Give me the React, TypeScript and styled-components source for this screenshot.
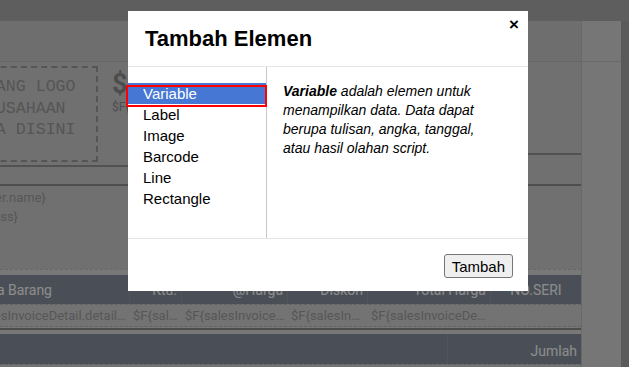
import React from 'react';
import styled, { createGlobalStyle } from 'styled-components';

const GlobalStyle = createGlobalStyle`
  html, body {
    margin: 0;
    padding: 0;
    width: 629px;
    height: 367px;
    overflow: hidden;
  }
  body {
    font-family: Roboto, "Liberation Sans", Arial, sans-serif;
  }
`;

const Page = styled.div`
  position: relative;
  width: 629px;
  height: 367px;
  overflow: hidden;
  display: flex;
  flex-direction: column;
  background: #cdcdcd;
`;

const TopBar = styled.div`
  height: 21px;
  flex-shrink: 0;
  background: #ababab;
`;

const Workspace = styled.div`
  flex: 1;
  display: flex;
  flex-direction: row;
`;

const Paper = styled.div`
  width: 581px;
  flex-shrink: 0;
  display: flex;
  flex-direction: column;
  background: #cdcdcd;
  border-right: 1px solid #bdbdbd;
`;

const SideColumn = styled.div`
  width: 39px;
  flex-shrink: 0;
  background: #d8d8d8;
`;

const SideHead = styled.div`
  height: 40px;
  border-bottom: 1px solid #c0c0c0;
`;

const Gutter = styled.div`
  flex: 1;
  background: #a4a4a4;
`;

const PaperTop = styled.div`
  height: 40px;
  flex-shrink: 0;
  background: #c8c8c8;
  border-bottom: 1px solid #b8b8b8;
`;

const HeaderRow = styled.div`
  display: flex;
  flex-direction: row;
  height: 105px;
  flex-shrink: 0;
`;

const HeaderLeft = styled.div`
  width: 300px;
  display: flex;
  flex-direction: row;
  align-items: flex-start;
  border-bottom: 2px solid #969696;
`;

const HeaderRight = styled.div`
  flex: 1;
  margin-left: 228px;
  height: 91px;
  border-bottom: 2px solid #969696;
`;

const LogoBox = styled.div`
  margin: 4px 0 0 -40px;
  width: 130px;
  height: 84px;
  padding: 8px 0 0 4px;
  border: 2px dashed #9b9b9b;
  font-family: "Liberation Mono", "DejaVu Sans Mono", monospace;
  font-size: 16.6px;
  line-height: 21.5px;
  color: #9b9b9b;
  white-space: nowrap;
  flex-shrink: 0;
`;

const PriceBlock = styled.div`
  margin: 8px 0 0 14px;
  display: flex;
  flex-direction: column;
  color: #8c8c8c;
`;

const Dollar = styled.span`
  font-size: 27px;
  font-weight: bold;
  line-height: 28px;
`;

const PriceField = styled.span`
  font-size: 12px;
  line-height: 18px;
`;

const Spacer = styled.div`
  height: 17px;
  flex-shrink: 0;
  border-bottom: 2px solid #8f8f8f;
`;

const CustomerBlock = styled.div`
  height: 81px;
  flex-shrink: 0;
  padding-top: 2px;
`;

const ClippedLine = styled.div<{ $end: number }>`
  width: ${({ $end }) => $end}px;
  display: flex;
  justify-content: flex-end;
  white-space: nowrap;
  font-size: 13px;
  line-height: 19px;
  color: #9e9e9e;
`;

const TableBand = styled.div`
  flex: 1;
  background: #dadada;
  border-top: 1px dashed #bdbdbd;
  padding-top: 5px;
  display: flex;
  flex-direction: column;
`;

const HeadRow = styled.div<{ $tall?: boolean }>`
  display: flex;
  flex-direction: row;
  height: ${({ $tall }) => ($tall ? 30 : 29)}px;
  background: #88919e;
  color: #ffffff;
  font-size: 14px;
  flex-shrink: 0;
`;

const HeadCell = styled.div<{ $w?: number; $align?: string; $indent?: number }>`
  width: ${({ $w }) => ($w ? `${$w}px` : 'auto')};
  flex: ${({ $w }) => ($w ? '0 0 auto' : '1')};
  display: flex;
  align-items: center;
  justify-content: ${({ $align }) => $align || 'flex-end'};
  padding: 0 4px;
  box-sizing: border-box;
  border-right: 1px solid #939ca8;
  white-space: nowrap;
  overflow: hidden;
  text-indent: ${({ $indent }) => $indent || 0}px;
  &:last-child {
    border-right: none;
  }
`;

const BodyRow = styled.div`
  display: flex;
  flex-direction: row;
  height: 21px;
  border-top: 1px dashed #b5b5b5;
  border-bottom: 1px dashed #b5b5b5;
  background: #d2d2d2;
  font-size: 13px;
  color: #9e9e9e;
  flex-shrink: 0;
`;

const BodyCell = styled.div<{ $w?: number; $indent?: number }>`
  width: ${({ $w }) => ($w ? `${$w}px` : 'auto')};
  flex: ${({ $w }) => ($w ? '0 0 auto' : '1')};
  padding: 0 3px;
  box-sizing: border-box;
  line-height: 21px;
  white-space: nowrap;
  overflow: hidden;
  text-overflow: ellipsis;
  text-indent: ${({ $indent }) => $indent || 0}px;
`;

const Divider = styled.div`
  height: 2px;
  margin: 1px 0 4px;
  background: #8a8a8a;
  flex-shrink: 0;
`;

const Backdrop = styled.div`
  position: absolute;
  inset: 0;
  background: rgba(0, 0, 0, 0.45);
`;

const Modal = styled.div`
  position: absolute;
  top: 11px;
  left: 128px;
  width: 400px;
  height: 280px;
  background: #ffffff;
  display: flex;
  flex-direction: column;
  font-family: "Liberation Sans", Arial, sans-serif;
  color: #000;
`;

const ModalHeader = styled.div`
  height: 56px;
  flex-shrink: 0;
  box-sizing: border-box;
  padding: 14px 17px 0;
  border-bottom: 1px solid #e5e5e5;
`;

const ModalTitle = styled.h3`
  margin: 0;
  font-size: 22px;
  font-weight: bold;
  line-height: 28px;
`;

const CloseButton = styled.span`
  position: absolute;
  top: 5px;
  right: 9px;
  font-size: 17px;
  font-weight: bold;
  line-height: 17px;
  color: #000;
`;

const ModalBody = styled.div`
  height: 171px;
  flex-shrink: 0;
  display: flex;
  flex-direction: row;
`;

const ElementList = styled.ul`
  list-style: none;
  margin: 0;
  padding: 16px 0 0;
  width: 138px;
  flex-shrink: 0;
  border-right: 1px solid #c8c8c8;
`;

const ElementItem = styled.li<{ $active?: boolean }>`
  position: relative;
  height: 21px;
  padding-left: 15px;
  font-size: 15px;
  line-height: 21px;
  background: ${({ $active }) => ($active ? '#4677d5' : 'transparent')};
  color: ${({ $active }) => ($active ? '#ffffff' : '#000000')};
`;

const Marker = styled.span`
  position: absolute;
  top: 2px;
  left: -2px;
  right: -1px;
  height: 18px;
  border: 2px solid #ff0000;
`;

const Description = styled.p`
  margin: 0;
  padding: 15px 23px 0 16px;
  font-size: 14px;
  line-height: 19px;
  font-style: italic;
`;

const ModalFooter = styled.div`
  flex: 1;
  display: flex;
  justify-content: flex-end;
  align-items: flex-start;
  padding: 15px 15px 0;
  border-top: 1px solid #e5e5e5;
`;

const AddButton = styled.button`
  font-family: "Liberation Sans", Arial, sans-serif;
  font-size: 15px;
  height: 24px;
  padding: 0 7px;
  background: #efefef;
  border: 1px solid #767676;
  border-radius: 3px;
  color: #000;
`;

const elements = ['Variable', 'Label', 'Image', 'Barcode', 'Line', 'Rectangle'];

const columns = [
  { label: 'Nama Barang', w: 130, align: 'flex-start', indent: -37, value: '$F{salesInvoiceDetail.detailName}' },
  { label: 'Ktu.', w: 52, value: '$F{salesInvoiceDetail.qty}' },
  { label: '@Harga', w: 106, value: '$F{salesInvoiceDetail.price}' },
  { label: 'Diskon', w: 80, value: '$F{salesInvoiceDetail.discount}' },
  { label: 'Total Harga', w: 123, value: '$F{salesInvoiceDetail.total}' },
  { label: 'NO.SERI', align: 'center', value: '' },
];

export default function App() {
  return (
    <>
      <GlobalStyle />
      <Page>
        <TopBar />
        <Workspace>
          <Paper>
            <PaperTop />
            <HeaderRow>
              <HeaderLeft>
                <LogoBox>
                  PASANG LOGO
                  <br />
                  PERUSAHAAN
                  <br />
                  ANDA DISINI
                </LogoBox>
                <PriceBlock>
                  <Dollar>$</Dollar>
                  <PriceField>$F{'{'}company.name{'}'}</PriceField>
                </PriceBlock>
              </HeaderLeft>
              <HeaderRight />
            </HeaderRow>
            <Spacer />
            <CustomerBlock>
              <ClippedLine $end={46}>$F{'{'}customer.name{'}'}</ClippedLine>
              <ClippedLine $end={18}>$F{'{'}customer.address{'}'}</ClippedLine>
            </CustomerBlock>
            <TableBand>
              <HeadRow>
                {columns.map((c) => (
                  <HeadCell key={c.label} $w={c.w} $align={c.align} $indent={c.indent}>
                    {c.label}
                  </HeadCell>
                ))}
              </HeadRow>
              <BodyRow>
                {columns.map((c) => (
                  <BodyCell key={c.label} $w={c.w} $indent={c.indent ? -45 : 0}>
                    {c.value}
                  </BodyCell>
                ))}
              </BodyRow>
              <Divider />
              <HeadRow $tall>
                <HeadCell $w={448} />
                <HeadCell $align="flex-end">
                  <span style={{ marginTop: 4 }}>Jumlah</span>
                </HeadCell>
              </HeadRow>
              <BodyRow>
                <BodyCell $w={448} $indent={-26}>$F{'{'}totalInWords{'}'}</BodyCell>
                <BodyCell>$F{'{'}salesInvoiceDetail.total{'}'}</BodyCell>
              </BodyRow>
            </TableBand>
          </Paper>
          <SideColumn>
            <SideHead />
          </SideColumn>
          <Gutter />
        </Workspace>
        <Backdrop />
        <Modal>
          <ModalHeader>
            <ModalTitle>Tambah Elemen</ModalTitle>
          </ModalHeader>
          <CloseButton>×</CloseButton>
          <ModalBody>
            <ElementList>
              {elements.map((el, i) => (
                <ElementItem key={el} $active={i === 0}>
                  {el}
                  {i === 0 && <Marker />}
                </ElementItem>
              ))}
            </ElementList>
            <Description>
              <b>Variable</b> adalah elemen untuk menampilkan data. Data dapat berupa tulisan,
              angka, tanggal, atau hasil olahan script.
            </Description>
          </ModalBody>
          <ModalFooter>
            <AddButton>Tambah</AddButton>
          </ModalFooter>
        </Modal>
      </Page>
    </>
  );
}
